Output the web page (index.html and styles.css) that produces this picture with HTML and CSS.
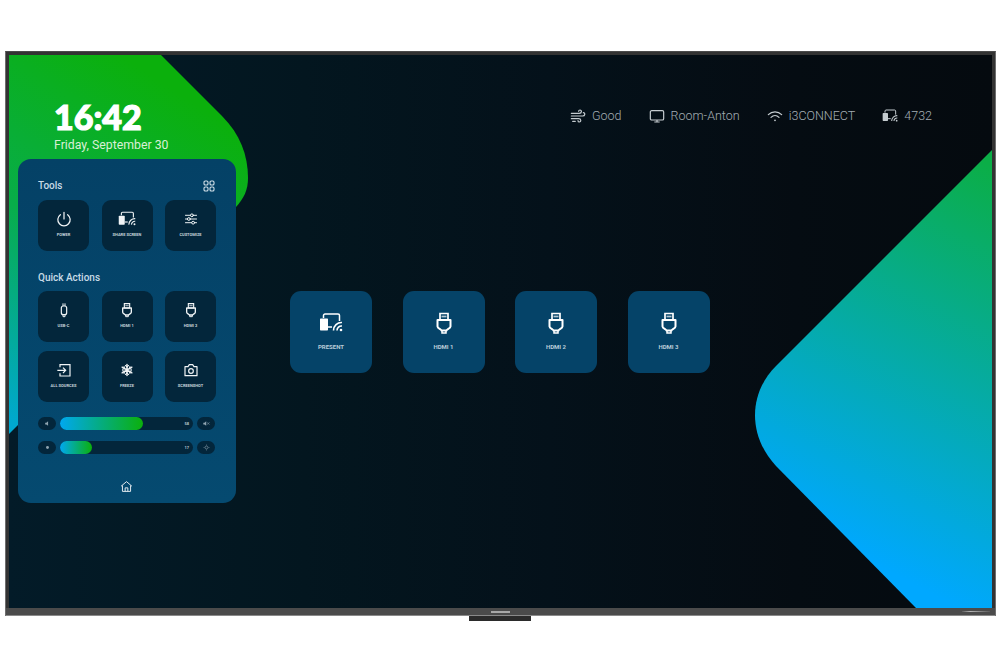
FILE: index.html
```html
<!DOCTYPE html>
<html lang="en">
<head>
    <meta charset="UTF-8">
    <meta name="viewport" content="width=device-width, initial-scale=1.0">
    <title>Home screen</title>
    <link rel="stylesheet" href="styles.css">
</head>
<body>
    <svg class="icon-defs" width="0" height="0">
        <symbol id="i-share" viewBox="0 0 24 24">
            <path d="M4.500 7V4.500C4.500 3.700 5.200 3 6 3H19C19.800 3 20.500 3.700 20.500 4.500V10" fill="none" stroke="currentColor" stroke-width="1.500"/>
            <path d="M2 7.500H8C8.600 7.500 9 7.900 9 8.500V18.500C9 19.100 8.600 19.500 8 19.500H2C1.400 19.500 1 19.100 1 18.500V8.500C1 7.900 1.400 7.500 2 7.500Z" fill="currentColor"/>
            <path d="M9 16H13" fill="none" stroke="currentColor" stroke-width="1.500"/>
            <path d="M14.500 19.500A8 8 0 0 1 23 11.500M18 19.500A4.500 4.500 0 0 1 23 15" fill="none" stroke="currentColor" stroke-width="1.600"/>
            <circle cx="22" cy="19" r="1.300" fill="currentColor"/>
        </symbol>
        <symbol id="i-hdmi" viewBox="0 0 24 24">
            <path d="M8 2.500H16V9H8Z" fill="none" stroke="currentColor" stroke-width="1.700"/>
            <path d="M9.500 5.500H14.500" fill="none" stroke="currentColor" stroke-width="1.700" opacity="0.700"/>
            <path d="M5.500 9H18.500V15.500C18.500 17.500 14.500 18.500 14.500 19.500H9.500C9.500 18.500 5.500 17.500 5.500 15.500Z" fill="none" stroke="currentColor" stroke-width="2" stroke-linejoin="round"/>
            <path d="M10 19.500V22H14V19.500" fill="none" stroke="currentColor" stroke-width="1.500"/>
        </symbol>
        <symbol id="i-usbc" viewBox="0 0 24 24">
            <path d="M10.500 2V6M13.500 2V6" fill="none" stroke="currentColor" stroke-width="1.500"/>
            <rect x="8" y="6" width="8" height="13" rx="3" fill="none" stroke="currentColor" stroke-width="1.800"/>
            <path d="M10.500 19V22H13.500V19" fill="none" stroke="currentColor" stroke-width="1.500"/>
        </symbol>
    </svg>

    <div class="tv">
        <div class="screen">
            <svg class="wallpaper" viewBox="9 55 983 553" preserveAspectRatio="none">
                <defs>
                    <linearGradient id="grad-left" gradientUnits="userSpaceOnUse" x1="190" y1="100" x2="-10" y2="410">
                        <stop offset="0" stop-color="#0bb00c"/>
                        <stop offset="0.5" stop-color="#08ad4a"/>
                        <stop offset="1" stop-color="#00a8d0"/>
                    </linearGradient>
                    <linearGradient id="grad-right" gradientUnits="userSpaceOnUse" x1="1000" y1="170" x2="810" y2="530">
                        <stop offset="0" stop-color="#0bae47"/>
                        <stop offset="1" stop-color="#00a8ff"/>
                    </linearGradient>
                </defs>
                <path d="M9 55H161L222 116C240 134 248 155 248 178C248 190 244 198 236 207L9 434Z" fill="url(#grad-left)"/>
                <path d="M992 150L776 366C748 394 748 436 776 466L916 608H992Z" fill="url(#grad-right)"/>
            </svg>

            <div class="left-col">
                <div class="clock">
                    <div class="clock-time">16:42</div>
                    <div class="clock-date">Friday, September 30</div>
                </div>

                <div class="panel">
                    <div class="panel-head">
                        <h2>Tools</h2>
                        <svg class="apps-icon" viewBox="0 0 12 12" fill="none" stroke="currentColor" stroke-width="1.100">
                            <rect x="1" y="1" width="4" height="4" rx="1.300"/>
                            <rect x="7" y="1" width="4" height="4" rx="1.300"/>
                            <rect x="1" y="7" width="4" height="4" rx="1.300"/>
                            <rect x="7" y="7" width="4" height="4" rx="1.300"/>
                        </svg>
                    </div>
                    <div class="mini-grid">
                        <div class="mini-tile">
                            <svg class="mini-icon" viewBox="1 1 22 22" fill="none" stroke="currentColor" stroke-width="1.700" stroke-linecap="round">
                                <path d="M12 3V12"/>
                                <path d="M7 6A8.500 8.500 0 1 0 17 6"/>
                            </svg>
                            <span>POWER</span>
                        </div>
                        <div class="mini-tile">
                            <svg class="mini-icon wide"><use href="#i-share"/></svg>
                            <span>SHARE SCREEN</span>
                        </div>
                        <div class="mini-tile">
                            <svg class="mini-icon" viewBox="-1 -1 26 26" fill="none" stroke="currentColor" stroke-width="1.600" stroke-linecap="round">
                                <path d="M3 6H11M16 6H21M3 12H6M11 12H21M3 18H13M18 18H21"/>
                                <circle cx="13.500" cy="6" r="2.300"/>
                                <circle cx="8.500" cy="12" r="2.300"/>
                                <circle cx="15.500" cy="18" r="2.300"/>
                            </svg>
                            <span>CUSTOMIZE</span>
                        </div>
                    </div>

                    <h2 class="quick-title">Quick Actions</h2>
                    <div class="mini-grid">
                        <div class="mini-tile">
                            <svg class="mini-icon"><use href="#i-usbc"/></svg>
                            <span>USB-C</span>
                        </div>
                        <div class="mini-tile">
                            <svg class="mini-icon"><use href="#i-hdmi"/></svg>
                            <span>HDMI 1</span>
                        </div>
                        <div class="mini-tile">
                            <svg class="mini-icon"><use href="#i-hdmi"/></svg>
                            <span>HDMI 2</span>
                        </div>
                        <div class="mini-tile">
                            <svg class="mini-icon" viewBox="0 0 24 24" fill="none" stroke="currentColor" stroke-width="1.800">
                                <path d="M6 8V4H21V21H6V17"/>
                                <path d="M2 12.500H14M10.500 8.500L14.500 12.500L10.500 16.500"/>
                            </svg>
                            <span>ALL SOURCES</span>
                        </div>
                        <div class="mini-tile">
                            <svg class="mini-icon" viewBox="-3 -3 30 30" fill="none" stroke="currentColor" stroke-width="2.800" stroke-linecap="round">
                                <path d="M12 1.500V22.500M2.900 6.800L21.100 17.200M2.900 17.200L21.100 6.800"/>
                                <path d="M9 3.500L12 6.500L15 3.500M9 20.500L12 17.500L15 20.500M3.500 10.500L7.500 9.500L6.500 5.500M20.500 10.500L16.500 9.500L17.500 5.500M3.500 13.500L7.500 14.500L6.500 18.500M20.500 13.500L16.500 14.500L17.500 18.500" stroke-width="2"/>
                            </svg>
                            <span>FREEZE</span>
                        </div>
                        <div class="mini-tile">
                            <svg class="mini-icon" viewBox="0 0 24 24" fill="none" stroke="currentColor" stroke-width="1.800" stroke-linejoin="round">
                                <path d="M3 7H7.500L9.500 4H14.500L16.500 7H21V20.500H3Z"/>
                                <circle cx="12" cy="13.500" r="3.500"/>
                            </svg>
                            <span>SCREENSHOT</span>
                        </div>
                    </div>

                    <div class="slider-row">
                        <div class="slider-btn">
                            <svg viewBox="0 0 12 12" fill="currentColor"><path d="M2 4.500H4L7 2V10L4 7.500H2Z"/></svg>
                        </div>
                        <div class="slider-track">
                            <div class="slider-fill" style="width: 62.4%"></div>
                            <span class="slider-value">58</span>
                        </div>
                        <div class="slider-btn">
                            <svg viewBox="0 0 12 12" fill="currentColor"><path d="M0.500 4.500H2.500L5.500 2V10L2.500 7.500H0.500Z"/><path d="M7 4L11 8M11 4L7 8" fill="none" stroke="currentColor"/></svg>
                        </div>
                    </div>
                    <div class="slider-row">
                        <div class="slider-btn">
                            <svg viewBox="0 0 12 12" fill="currentColor"><circle cx="6" cy="6" r="2.500"/></svg>
                        </div>
                        <div class="slider-track">
                            <div class="slider-fill" style="width: 24%"></div>
                            <span class="slider-value">17</span>
                        </div>
                        <div class="slider-btn">
                            <svg viewBox="0 0 12 12" fill="none" stroke="currentColor"><circle cx="6" cy="6" r="2.500"/><path d="M6 1V2.500M6 9.500V11M1 6H2.500M9.500 6H11"/></svg>
                        </div>
                    </div>

                    <svg class="home-icon" viewBox="0 0 24 24" fill="none" stroke="currentColor" stroke-width="1.800" stroke-linejoin="round">
                        <path d="M2 11.500L12 3L22 11.500"/>
                        <path d="M4.500 10V21H19.500V10"/>
                        <path d="M9.500 21V14.500H14.500V21"/>
                    </svg>
                </div>
            </div>

            <div class="main">
                <div class="status-bar">
                    <div class="status-item">
                        <svg class="status-icon wind" viewBox="0 0 24 24" fill="none" stroke="currentColor" stroke-width="1.800" stroke-linecap="round">
                            <path d="M2 8H14C18 8 18 3 15 3C13.500 3 13 4 13 5"/>
                            <path d="M2 12H19C23 12 23 7 20 7"/>
                            <path d="M2 16H13C17 16 17 21 14 21C12.500 21 12 20 12 19"/>
                            <path d="M4 20H8"/>
                        </svg>
                        <span>Good</span>
                    </div>
                    <div class="status-item">
                        <svg class="status-icon" viewBox="0 0 24 24" fill="none" stroke="currentColor" stroke-width="1.800" stroke-linejoin="round">
                            <rect x="2" y="4" width="20" height="14" rx="2"/>
                            <path d="M8 21H16M12 18V21"/>
                        </svg>
                        <span>Room-Anton</span>
                    </div>
                    <div class="status-item">
                        <svg class="status-icon" viewBox="0 0 24 24" fill="none" stroke="currentColor" stroke-width="1.800" stroke-linecap="round">
                            <path d="M2 10C7.500 4.500 16.500 4.500 22 10"/>
                            <path d="M6 14C9.500 10.500 14.500 10.500 18 14"/>
                            <circle cx="12" cy="18.500" r="1.300" fill="currentColor" stroke="none"/>
                        </svg>
                        <span>i3CONNECT</span>
                    </div>
                    <div class="status-item">
                        <svg class="status-icon"><use href="#i-share"/></svg>
                        <span>4732</span>
                    </div>
                </div>

                <div class="input-row">
                    <div class="input-tile">
                        <svg class="input-icon"><use href="#i-share"/></svg>
                        <span>PRESENT</span>
                    </div>
                    <div class="input-tile">
                        <svg class="input-icon"><use href="#i-hdmi"/></svg>
                        <span>HDMI 1</span>
                    </div>
                    <div class="input-tile">
                        <svg class="input-icon"><use href="#i-hdmi"/></svg>
                        <span>HDMI 2</span>
                    </div>
                    <div class="input-tile">
                        <svg class="input-icon"><use href="#i-hdmi"/></svg>
                        <span>HDMI 3</span>
                    </div>
                </div>
            </div>
        </div>

        <div class="bezel-bottom">
            <i class="logo-mark"></i>
            <i class="logo-mark small"></i>
        </div>
    </div>
    <div class="stand"></div>
</body>
</html>
```

FILE: styles.css
```css
body {
    font-family: Roboto, "Liberation Sans", sans-serif;
    margin: 0;
    padding-top: 51px;
    background-color: #ffffff;
    display: flex;
    flex-direction: column;
    align-items: center;
    overflow: hidden;
}

.icon-defs {
    position: absolute;
}

/* TV frame */
.tv {
    width: 991px;
    align-self: flex-start;
    margin-left: 5px;
    background-color: #333333;
    border: 1px solid #6e6e6e;
    border-top-color: #4a4a4a;
    border-bottom: none;
    padding: 3px 3px 0 3px;
    box-sizing: border-box;
}

.screen {
    position: relative;
    height: 553px;
    display: flex;
    overflow: hidden;
    background: linear-gradient(90deg, #031b28 0%, #03161f 30%, #04111a 55%, #050c12 80%, #050a0f 100%);
}

.bezel-bottom {
    height: 8px;
    margin: 0 -3px;
    background-color: #4b4b4b;
    border-bottom: 1px solid #8a8a8a;
    box-sizing: border-box;
    display: flex;
    justify-content: space-between;
    align-items: center;
    padding: 0 5px 0 485px;
}

.logo-mark {
    width: 19px;
    height: 2px;
    background-color: #a8a8a8;
}

.logo-mark.small {
    width: 28px;
    height: 1px;
    background: linear-gradient(90deg, #5a5a5a, #b5b5b5 30%, #5a5a5a);
}

.stand {
    width: 62px;
    height: 5px;
    background-color: #2b2b2b;
}

.wallpaper {
    position: absolute;
    left: 0;
    top: 0;
    width: 100%;
    height: 100%;
}

/* Left column */
.left-col {
    position: relative;
    width: 218px;
    margin-left: 9px;
    flex-shrink: 0;
}

.clock {
    height: 104px;
    padding: 45px 0 0 36px;
    box-sizing: border-box;
    color: #ffffff;
}

.clock-time {
    font-family: Lato, sans-serif;
    font-size: 34px;
    font-weight: 900;
    line-height: 34px;
    -webkit-text-stroke: 1.200px #ffffff;
}

.clock-date {
    font-size: 12.300px;
    line-height: 16px;
    margin-top: 3px;
    color: #d9efd6;
}

.panel {
    height: 344px;
    padding: 18px 21px 0 20px;
    box-sizing: border-box;
    background: linear-gradient(180deg, #044166, #054a70);
    border-radius: 13px;
    display: flex;
    flex-direction: column;
}

.panel h2 {
    margin: 0;
    font-size: 10px;
    font-weight: 500;
    line-height: 18px;
    color: #c8dbe6;
}

.panel-head {
    display: flex;
    justify-content: space-between;
    align-items: center;
    margin-bottom: 5px;
}

.apps-icon {
    width: 12px;
    height: 12px;
    color: #d4e2ea;
}

.panel .quick-title {
    margin-top: 18px;
    margin-bottom: 4px;
}

.mini-grid {
    display: grid;
    grid-template-columns: repeat(3, 51px);
    grid-auto-rows: 51px;
    column-gap: 12.500px;
    row-gap: 8.500px;
}

.mini-tile {
    background-color: #03263b;
    border-radius: 9px;
    display: flex;
    flex-direction: column;
    align-items: center;
    color: #e6edf1;
    padding-top: 11px;
    box-sizing: border-box;
}

.mini-tile span {
    font-size: 4px;
    font-weight: 700;
    line-height: 6px;
    margin-top: 5px;
    white-space: nowrap;
    color: #c4d2da;
}

.mini-icon {
    width: 16px;
    height: 16px;
    color: #f0f4f6;
}

.mini-icon.wide {
    width: 18px;
    height: 18px;
    margin: -1px 0;
}

.slider-row {
    display: flex;
    gap: 4px;
    height: 12.500px;
    margin-top: 11.500px;
}

.mini-grid + .slider-row {
    margin-top: 15.500px;
}

.slider-btn {
    width: 18px;
    background-color: #03263b;
    border-radius: 7px;
    color: #8fa4b0;
    display: flex;
    align-items: center;
    justify-content: center;
}

.slider-btn svg {
    width: 7px;
    height: 7px;
}

.slider-track {
    position: relative;
    flex: 1;
    background-color: #03263b;
    border-radius: 7px;
    display: flex;
    align-items: center;
    justify-content: flex-end;
}

.slider-fill {
    position: absolute;
    left: 0;
    top: 0;
    bottom: 0;
    border-radius: 7px;
    background: linear-gradient(90deg, #00a8f0, #0bb00c);
}

.slider-value {
    font-size: 4px;
    font-weight: 700;
    color: #b6c5cd;
    padding-right: 4px;
}

.home-icon {
    width: 13px;
    height: 13px;
    color: #e6edf1;
    margin: 26px auto 0;
}

/* Main area */
.main {
    position: relative;
    flex: 1;
    padding-left: 54px;
}

.status-bar {
    display: flex;
    justify-content: flex-end;
    gap: 27px;
    padding: 51px 60px 0 0;
    height: 236px;
    box-sizing: border-box;
}

.status-item {
    display: flex;
    align-items: flex-start;
    gap: 6px;
    font-size: 12.500px;
    font-weight: 300;
    line-height: 20px;
    color: #a4aeb4;
}

.status-icon {
    width: 16px;
    height: 16px;
    margin-top: 2px;
    color: #c5ccd0;
}

.input-row {
    display: flex;
    gap: 30.500px;
}

.input-tile {
    width: 82px;
    height: 82px;
    background-color: #054368;
    border-radius: 11px;
    display: flex;
    flex-direction: column;
    align-items: center;
    padding-top: 20px;
    box-sizing: border-box;
    color: #ffffff;
}

.input-tile span {
    font-size: 6px;
    font-weight: 700;
    line-height: 8px;
    margin-top: 8px;
    color: #b9ccd8;
}

.input-icon {
    width: 24px;
    height: 24px;
}
```
